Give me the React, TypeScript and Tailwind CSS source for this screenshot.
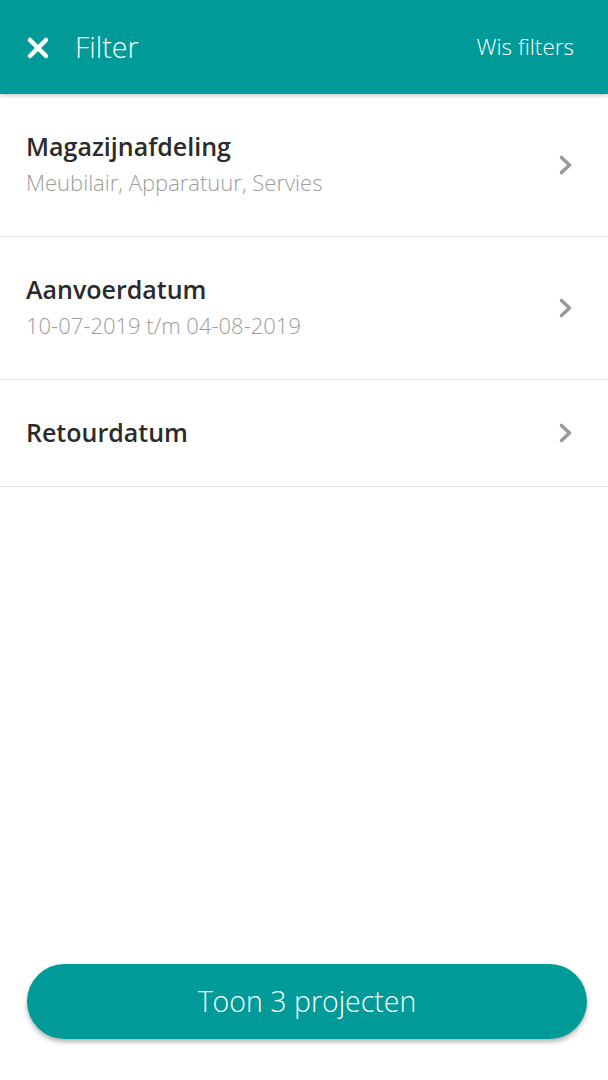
const rows = [
  { title: "Magazijnafdeling", sub: "Meubilair, Apparatuur, Servies" },
  { title: "Aanvoerdatum", sub: "10-07-2019 t/m 04-08-2019" },
  { title: "Retourdatum" },
];

function Chevron() {
  return (
    <svg width="16" height="22" viewBox="0 0 16 22" className="text-[#9a9a9a]">
      <path
        d="M3.5 3.5 L11.5 11 L3.5 18.5"
        fill="none"
        stroke="currentColor"
        strokeWidth="3.6"
        strokeLinecap="round"
        strokeLinejoin="round"
      />
    </svg>
  );
}

function FilterRow({ title, sub }: { title: string; sub?: string }) {
  return (
    <div
      className={`flex items-center justify-between border-b border-[#e4e4e4] pl-[26px] pr-[34px] ${
        sub ? "h-[143px]" : "h-[107px]"
      }`}
    >
      <div className={`flex flex-col ${sub ? "pb-[4px]" : "pb-[2px]"}`}>
        <span className="text-[25px] leading-[30px] font-semibold text-[#2b2b2b]">{title}</span>
        {sub && (
          <span className="mt-[8px] text-[22px] leading-[26px] font-light text-[#9c9c9c]">{sub}</span>
        )}
      </div>
      <Chevron />
    </div>
  );
}

export default function App() {
  return (
    <div className="flex h-[1080px] w-[608px] flex-col bg-white font-['Open_Sans',sans-serif]">
      <header className="relative z-10 flex h-[94px] items-center justify-between bg-[#009a98] pl-[27px] pr-[34px] shadow-[0_2px_4px_rgba(0,0,0,0.2)]">
        <div className="flex items-center gap-[26px]">
          <svg width="22" height="22" viewBox="0 0 22 22" className="mt-[1px]">
            <path d="M3 3 L19 19 M19 3 L3 19" stroke="white" strokeWidth="4.5" strokeLinecap="round" />
          </svg>
          <span className="text-[28.5px] font-light text-white">Filter</span>
        </div>
        <span className="text-[22.5px] font-light text-white">Wis filters</span>
      </header>

      <div className="flex flex-col">
        {rows.map((r) => (
          <FilterRow key={r.title} title={r.title} sub={r.sub} />
        ))}
      </div>

      <div className="mt-auto pb-[41px] pl-[27px] pr-[21px]">
        <button className="flex h-[75px] w-full items-center justify-center rounded-full bg-[#009a98] text-[28.5px] font-light text-white shadow-[0_3px_5px_rgba(0,0,0,0.3)]">
          Toon 3 projecten
        </button>
      </div>
    </div>
  );
}
